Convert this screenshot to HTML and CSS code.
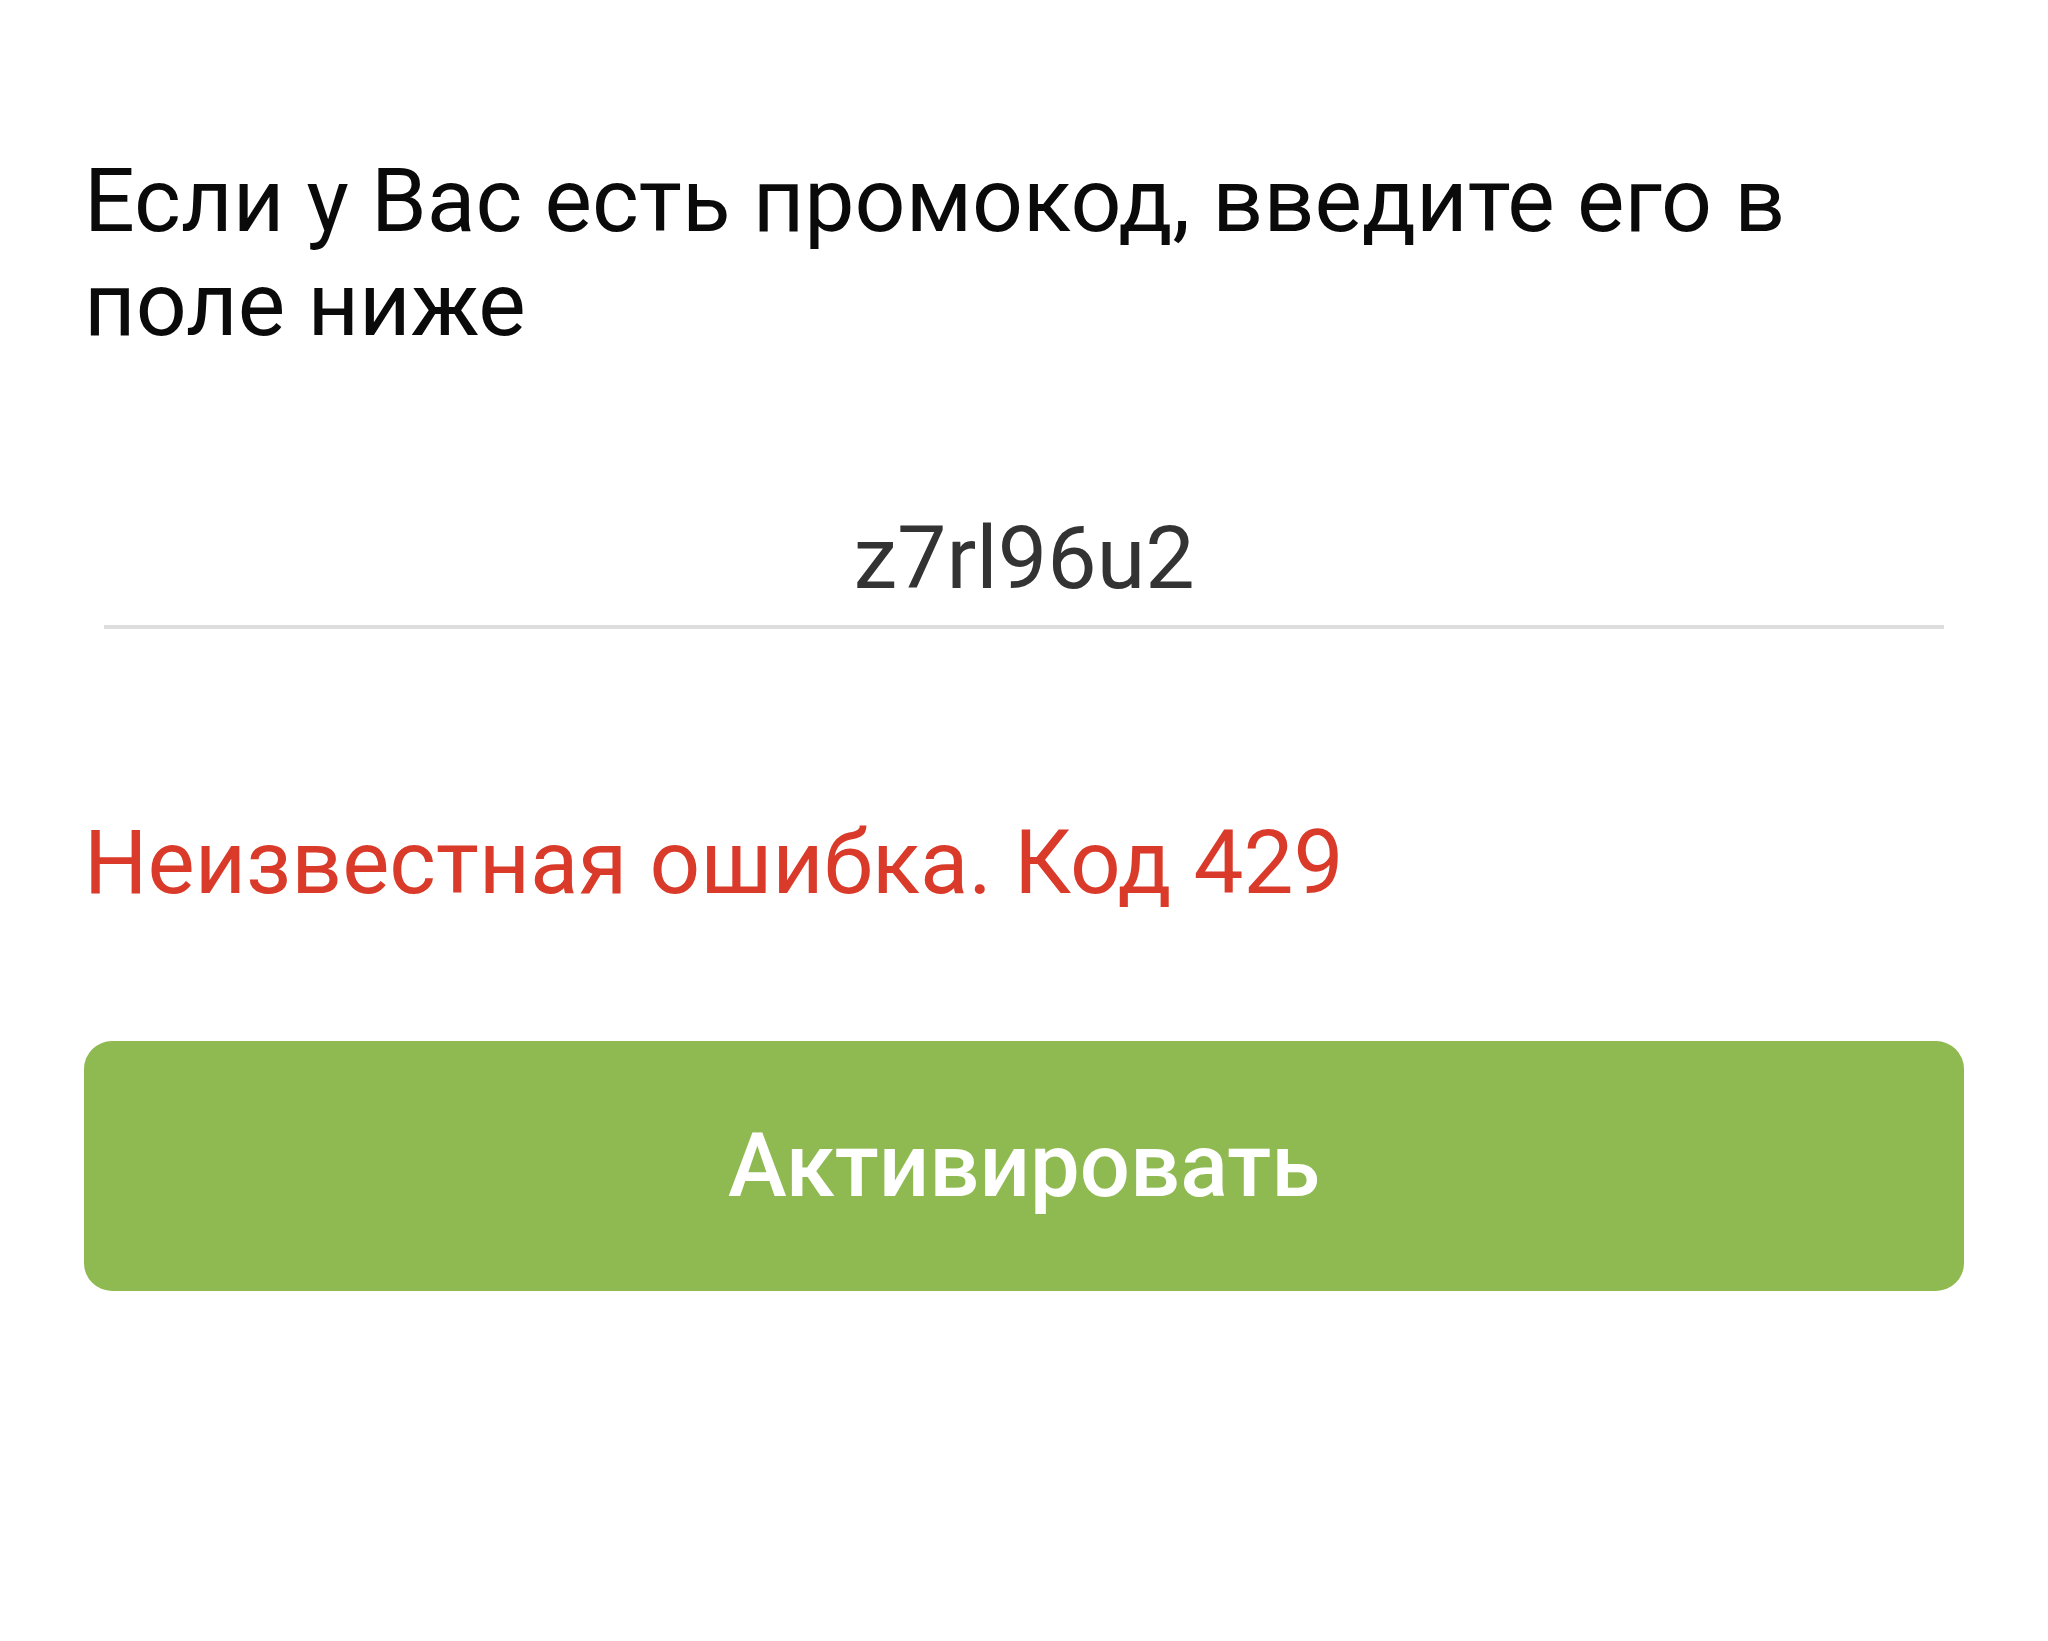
FILE: index.html
```html
<!DOCTYPE html>
<html lang="ru">
<head>
    <meta charset="UTF-8">
    <meta name="viewport" content="width=device-width, initial-scale=1.0">
    <title>Промокод</title>
    <link rel="stylesheet" href="styles.css">
</head>
<body>

    <div class="promo-container">
        <p class="promo-hint">Если у Вас есть промокод, введите его в поле ниже</p>

        <form id="promo-form" class="promo-form">
            <input type="text" id="promo_code" class="promo-input" name="promo_code" value="z7rl96u2">

            <div class="error-message" id="error-message">Неизвестная ошибка. Код 429</div>

            <button type="submit" class="activate-btn">Активировать</button>
        </form>
    </div>

</body>
</html>
```

FILE: styles.css
```css
body {
    font-family: Roboto, "Noto Sans", sans-serif;
    margin: 0;
    background-color: #ffffff;
}
.promo-container {
    padding: 149px 84px 0 84px;
}
.promo-hint {
    margin: 0;
    font-size: 89.5px;
    line-height: 104px;
    color: #0a0a0a;
}
.promo-form {
    display: flex;
    flex-direction: column;
}
.promo-input {
    display: block;
    margin: 132px 20px 0 20px;
    height: 136px;
    padding: 0;
    border: none;
    border-bottom: 4px solid #dddddd;
    font-family: Roboto, sans-serif;
    font-size: 88px;
    color: #333333;
    text-align: center;
    outline: none;
    background: transparent;
}
.error-message {
    margin-top: 182px;
    font-size: 89px;
    line-height: 104px;
    color: #d93a29;
}
.activate-btn {
    margin-top: 126px;
    height: 250px;
    border: none;
    border-radius: 28px;
    background-color: #8fba51;
    color: #ffffff;
    font-family: Roboto, sans-serif;
    font-size: 88.5px;
    font-weight: 500;
    cursor: pointer;
}
```
